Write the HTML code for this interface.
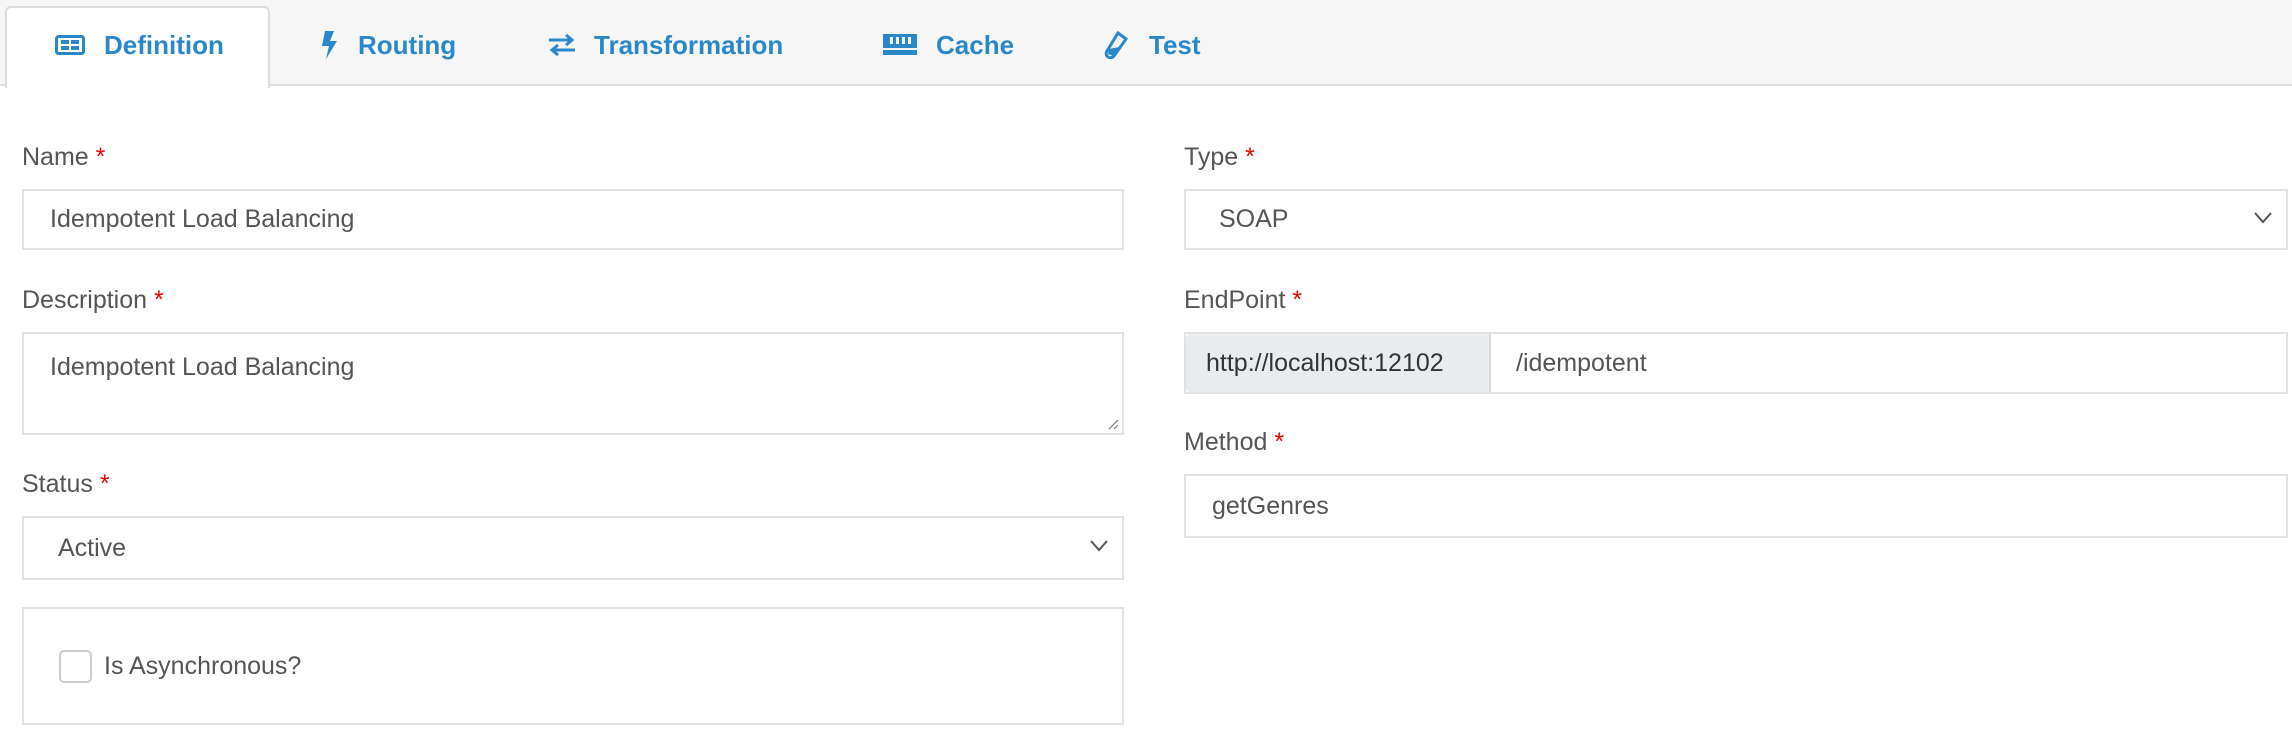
<!DOCTYPE html>
<html><head><meta charset="utf-8"><style>
*{box-sizing:border-box;margin:0;padding:0}
body{width:2292px;height:730px;background:#fff;font-family:"Liberation Sans",sans-serif;color:#555;position:relative;overflow:hidden}
.bar{position:absolute;left:0;top:0;width:2292px;height:86px;background:#f6f6f6;border-bottom:2px solid #dcdcdc}
.tab{position:absolute;top:30px;font-size:26px;font-weight:bold;color:#2a87c8;display:flex;align-items:center;gap:0}
.active{position:absolute;left:5px;top:6px;width:265px;height:82px;background:#fff;border:2px solid #dcdcdc;border-bottom:none;border-radius:6px 6px 0 0}
.ico{position:absolute;top:32px}
.lbl{position:absolute;font-size:25px;color:#555}
.lbl b{color:#e00;font-weight:normal}
.in{position:absolute;border:2px solid #e2e2e2;background:#fff;font-size:25px;padding-left:26px;display:flex;align-items:center;color:#555}
.chev{position:absolute;right:14px;top:50%;margin-top:-8px}
</style></head><body>
<div class="bar"></div>
<div class="active"></div>
<svg class="ico" style="left:55px;top:35px" width="30" height="20" viewBox="0 0 30 20"><rect x="1.5" y="1.5" width="27" height="17" rx="2" fill="none" stroke="#2a87c8" stroke-width="3"/><rect x="6" y="5" width="8" height="4" fill="#2a87c8"/><rect x="16" y="5" width="8" height="4" fill="#2a87c8"/><rect x="6" y="11" width="8" height="4" fill="#2a87c8"/><rect x="16" y="11" width="8" height="4" fill="#2a87c8"/></svg>
<div class="tab" style="left:104px">Definition</div>
<svg class="ico" style="left:320px;top:31px" width="18" height="28" viewBox="0 0 18 28"><path d="M5 0h9l-4 10h7L6 28l3-13H2z" fill="#2a87c8"/></svg>
<div class="tab" style="left:358px">Routing</div>
<svg class="ico" style="left:547px;top:33px" width="30" height="24" viewBox="0 0 30 24"><path d="M2 7h22M19 2l6 5-6 5M28 17H6M11 12l-6 5 6 5" fill="none" stroke="#2a87c8" stroke-width="3"/></svg>
<div class="tab" style="left:594px">Transformation</div>
<svg class="ico" style="left:883px;top:34px" width="34" height="22" viewBox="0 0 34 22"><rect x="0" y="0" width="34" height="14" fill="#2a87c8"/><rect x="7" y="3" width="3" height="7" fill="#f6f6f6"/><rect x="13" y="3" width="3" height="7" fill="#f6f6f6"/><rect x="19" y="3" width="3" height="7" fill="#f6f6f6"/><rect x="25" y="3" width="3" height="7" fill="#f6f6f6"/><rect x="0" y="16" width="34" height="5" fill="#2a87c8"/></svg>
<div class="tab" style="left:936px">Cache</div>
<svg class="ico" style="left:1104px;top:31px" width="24" height="28" viewBox="0 0 24 28"><path d="M14 2l8 6-12 17a4 4 0 0 1-7-5z" fill="none" stroke="#2a87c8" stroke-width="3"/><path d="M5 18l10-2-6 9-5-2z" fill="#2a87c8"/></svg>
<div class="tab" style="left:1149px">Test</div>

<div class="lbl" style="left:22px;top:143px">Name <b>*</b></div>
<div class="in" style="left:22px;top:189px;width:1102px;height:61px">Idempotent Load Balancing</div>
<div class="lbl" style="left:22px;top:286px">Description <b>*</b></div>
<div class="in" style="left:22px;top:332px;width:1102px;height:103px;align-items:flex-start;padding-top:19px">Idempotent Load Balancing
<svg style="position:absolute;right:3px;bottom:3px" width="12" height="12"><path d="M11 2L2 11M11 7L7 11" stroke="#777" stroke-width="1.2"/></svg></div>
<div class="lbl" style="left:22px;top:470px">Status <b>*</b></div>
<div class="in" style="left:22px;top:516px;width:1102px;height:64px;padding-left:34px">Active<svg class="chev" width="18" height="12"><path d="M1 1l8 9 8-9" fill="none" stroke="#555" stroke-width="2"/></svg></div>
<div class="in" style="left:22px;top:607px;width:1102px;height:118px;padding-left:35px"><span style="display:inline-block;width:33px;height:33px;border:2px solid #ccc;border-radius:5px;margin-right:12px"></span>Is Asynchronous?</div>

<div class="lbl" style="left:1184px;top:143px">Type <b>*</b></div>
<div class="in" style="left:1184px;top:189px;width:1104px;height:61px;padding-left:33px">SOAP<svg class="chev" width="18" height="12"><path d="M1 1l8 9 8-9" fill="none" stroke="#555" stroke-width="2"/></svg></div>
<div class="lbl" style="left:1184px;top:286px">EndPoint <b>*</b></div>
<div class="in" style="left:1184px;top:332px;width:1104px;height:62px;padding-left:0">
<div style="width:305px;height:100%;background:#e8ecef;border-right:2px solid #dcdcdc;display:flex;align-items:center;padding-left:20px;color:#333;border-radius:4px 0 0 4px">http://localhost:12102</div>
<span style="margin-left:25px">/idempotent</span></div>
<div class="lbl" style="left:1184px;top:428px">Method <b>*</b></div>
<div class="in" style="left:1184px;top:474px;width:1104px;height:64px;padding-left:26px">getGenres</div>
</body></html>
